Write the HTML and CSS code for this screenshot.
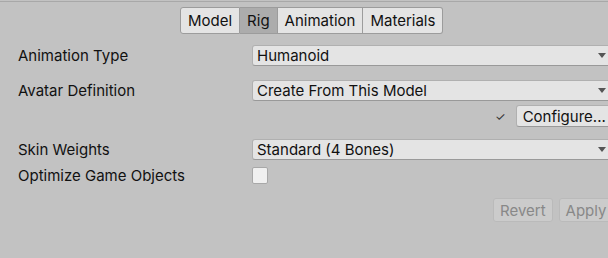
FILE: index.html
```html
<!DOCTYPE html>
<html lang="en">
<head>
  <meta charset="UTF-8">
  <title>Import Settings - Rig</title>
  <link rel="stylesheet" href="styles.css">
</head>
<body>
  <div class="inspector">
    <nav class="tabs">
      <button class="tab">Model</button>
      <button class="tab active">Rig</button>
      <button class="tab">Animation</button>
      <button class="tab">Materials</button>
    </nav>

    <div class="row">
      <label>Animation Type</label>
      <div class="dropdown">Humanoid</div>
    </div>
    <div class="row">
      <label>Avatar Definition</label>
      <div class="dropdown">Create From This Model</div>
    </div>
    <div class="configure-row">
      <span class="check">&#10003;</span>
      <button class="btn">Configure...</button>
    </div>

    <div class="row skin">
      <label>Skin Weights</label>
      <div class="dropdown">Standard (4 Bones)</div>
    </div>
    <div class="row tight">
      <label>Optimize Game Objects</label>
      <div class="checkbox"></div>
    </div>

    <div class="actions">
      <button class="btn disabled">Revert</button>
      <button class="btn disabled">Apply</button>
    </div>
  </div>
</body>
</html>
```

FILE: styles.css
```css
body {
  margin: 0;
  background: #c2c2c2;
  font-family: Inter, "Noto Sans", sans-serif;
  font-size: 15px;
  color: #111;
  overflow: hidden;
}
.inspector {
  border-top: 1px solid #a8a8a8;
  margin-top: 1px;
  width: 640px;
}
.tabs {
  display: flex;
  margin: 5px 0 0 180px;
  height: 27px;
}
.tab {
  font: inherit;
  color: #111;
  background: #e4e4e4;
  border: 1px solid #9c9c9c;
  border-left: none;
  padding: 0 7px;
  height: 27px;
}
.tab:first-child {
  border-left: 1px solid #9c9c9c;
  border-radius: 3px 0 0 3px;
}
.tab:last-child {
  border-radius: 0 3px 3px 0;
}
.tab.active {
  background: #acacac;
}
.row {
  display: flex;
  align-items: center;
  height: 21px;
  margin-top: 14px;
  padding-left: 18px;
}
.row:first-of-type {
  margin-top: 11px;
}
.row label {
  width: 234px;
  flex: none;
}
.dropdown {
  flex: 1;
  height: 19px;
  line-height: 19px;
  background: #e4e4e4;
  border: 1px solid #b0b0b0;
  border-bottom-color: #999;
  border-radius: 3px;
  padding-left: 4px;
  position: relative;
}
.dropdown::after {
  content: "";
  position: absolute;
  right: 33px;
  top: 7px;
  border-left: 4px solid transparent;
  border-right: 4px solid transparent;
  border-top: 5px solid #555;
}
.configure-row {
  display: flex;
  align-items: center;
  margin-top: 4px;
  padding-left: 495px;
  height: 22px;
  gap: 10px;
}
.check {
  font-size: 12px;
  color: #333;
}
.btn {
  font: inherit;
  color: #111;
  background: #e4e4e4;
  border: 1px solid #b0b0b0;
  border-bottom-color: #999;
  border-radius: 3px;
  height: 22px;
  padding: 0 6px;
}
.row.skin {
  margin-top: 12px;
}
.row.tight {
  margin-top: 5px;
}
.checkbox {
  width: 14px;
  height: 15px;
  background: #f0f0f0;
  border: 1px solid #a8a8a8;
  border-radius: 2px;
}
.actions {
  display: flex;
  gap: 6px;
  margin-top: 12px;
  padding-left: 493px;
}
.btn.disabled {
  color: #888;
  background: #cbcbcb;
  border-color: #bababa;
  height: 24px;
}
```
